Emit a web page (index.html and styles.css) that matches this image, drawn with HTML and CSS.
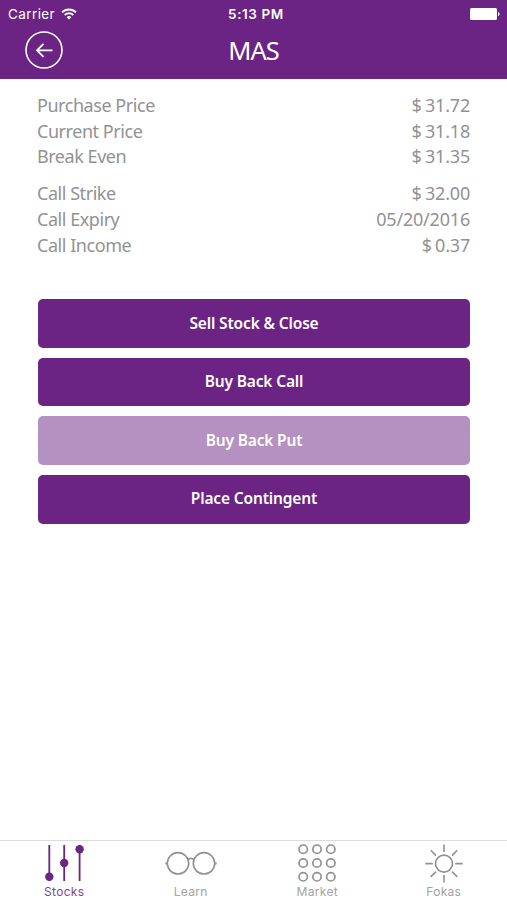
FILE: index.html
```html
<!DOCTYPE html>
<html lang="en">
<head>
  <meta charset="UTF-8">
  <meta name="viewport" content="width=device-width, initial-scale=1.0">
  <title>MAS</title>
  <link rel="stylesheet" href="styles.css">
</head>
<body>
  <header class="header">
    <div class="status-bar">
      <div class="carrier">
        <span>Carrier</span>
        <svg class="wifi" width="16" height="12" viewBox="0 0 16 12" fill="none" stroke="#fff" stroke-width="1.9">
          <path d="M1 4.3a10 10 0 0 1 14 0"/>
          <path d="M3.7 7a6.2 6.2 0 0 1 8.6 0"/>
          <path d="M8 11.6 5.6 9.2a3.4 3.4 0 0 1 4.8 0z" fill="#fff" stroke="none"/>
        </svg>
      </div>
      <div class="time">5:13 PM</div>
      <svg class="battery" width="30" height="12" viewBox="0 0 30 12" fill="#fff">
        <rect width="27" height="12" rx="1.5"/>
        <path d="M28 4c2 .6 2 3.4 0 4z"/>
      </svg>
    </div>
    <div class="nav-bar">
      <button class="back" aria-label="Back">
        <svg width="38" height="38" viewBox="0 0 38 38" fill="none" stroke="#fff" stroke-width="1.6">
          <circle cx="19" cy="19" r="18"/>
          <path d="M27.5 19.3H12M18.5 12.8 12 19.3l6.500 6.500" stroke-width="1.8"/>
        </svg>
      </button>
      <h1>MAS</h1>
    </div>
  </header>

  <main>
    <dl class="details">
      <div class="row"><dt>Purchase Price</dt><dd>$ 31.72</dd></div>
      <div class="row"><dt>Current Price</dt><dd>$ 31.18</dd></div>
      <div class="row"><dt>Break Even</dt><dd>$ 31.35</dd></div>
    </dl>
    <dl class="details">
      <div class="row"><dt>Call Strike</dt><dd>$ 32.00</dd></div>
      <div class="row"><dt>Call Expiry</dt><dd>05/20/2016</dd></div>
      <div class="row"><dt>Call Income</dt><dd>$ 0.37</dd></div>
    </dl>

    <div class="actions">
      <button class="btn">Sell Stock &amp; Close</button>
      <button class="btn">Buy Back Call</button>
      <button class="btn" disabled>Buy Back Put</button>
      <button class="btn">Place Contingent</button>
    </div>
  </main>

  <nav class="tabs">
    <a class="tab active">
      <svg width="56" height="40" viewBox="0 0 56 40" stroke="currentColor" stroke-width="1.8">
        <path d="M13.3 2v36M28.2 2v36M43.6 2v36"/>
        <g fill="currentColor" stroke="none">
          <circle cx="13.3" cy="33.8" r="4.2"/>
          <circle cx="28.2" cy="20" r="4.2"/>
          <circle cx="43.6" cy="6.3" r="4.2"/>
        </g>
      </svg>
      <span>Stocks</span>
    </a>
    <a class="tab">
      <svg width="56" height="40" viewBox="0 0 56 40" fill="none" stroke="currentColor" stroke-width="1.6">
        <circle cx="15" cy="20.300" r="10.700"/>
        <circle cx="41" cy="20.300" r="10.700"/>
        <path d="M24.800 17c1.500-2.200 4.900-2.200 6.400 0"/>
        <path d="M2.300 20.500h2M51.700 20.500h2" stroke-width="2.200"/>
      </svg>
      <span>Learn</span>
    </a>
    <a class="tab">
      <svg width="56" height="40" viewBox="0 0 56 40" fill="none" stroke="currentColor" stroke-width="1.7">
        <circle cx="14.2" cy="6.2" r="4.2"/><circle cx="28" cy="6.2" r="4.2"/><circle cx="41.8" cy="6.2" r="4.2"/>
        <circle cx="14.2" cy="20" r="4.2"/><circle cx="28" cy="20" r="4.2"/><circle cx="41.8" cy="20" r="4.2"/>
        <circle cx="14.2" cy="33.8" r="4.2"/><circle cx="28" cy="33.8" r="4.2"/><circle cx="41.8" cy="33.8" r="4.2"/>
      </svg>
      <span>Market</span>
    </a>
    <a class="tab">
      <svg width="56" height="40" viewBox="0 0 56 40" fill="none" stroke="currentColor" stroke-width="1.6">
        <circle cx="28" cy="20.600" r="8.500"/>
        <path d="M28 1.500v7.500M28 32v7.500M9.300 20.600h7.500M39.200 20.600h7.500M14.700 7.300l5.300 5.300M36 28.600l5.300 5.300M14.700 33.900l5.300-5.300M36 12.600l5.300-5.300"/>
      </svg>
      <span>Fokas</span>
    </a>
  </nav>
</body>
</html>
```

FILE: styles.css
```css
* {
    box-sizing: border-box;
}

body {
    margin: 0;
    height: 100vh;
    display: flex;
    flex-direction: column;
    background: #fff;
    color: #929292;
    font-family: "Noto Sans", "Open Sans", sans-serif;
}

button {
    border: 0;
    padding: 0;
    background: none;
    color: #fff;
    font-family: inherit;
}

.header {
    height: 79px;
    background: #6b2483;
    color: #fff;
}

/* Status bar */
.status-bar {
    display: grid;
    grid-template-columns: 1fr auto 1fr;
    align-items: center;
    height: 27px;
    padding: 0 7px 0 8px;
    font: 13.5px Inter, sans-serif;
}

.carrier {
    display: flex;
    align-items: center;
    gap: 6px;
    letter-spacing: 0.4px;
}

.time {
    padding-left: 4px;
    font-size: 13.5px;
    font-weight: 600;
    letter-spacing: 0.6px;
}

.battery {
    justify-self: end;
}

/* Title row */
.nav-bar {
    display: grid;
    grid-template-columns: 1fr auto 1fr;
    align-items: center;
    height: 46px;
    padding: 0 25px;
}

.back {
    width: 38px;
    height: 38px;
}

.back svg {
    display: block;
}

h1 {
    margin: 0;
    font-size: 25.5px;
    font-weight: 400;
    line-height: 34px;
    letter-spacing: -1px;
}

main {
    flex: 1;
    padding: 14px 37px 0;
}

.details {
    margin: 0 0 11px;
    font-size: 18px;
    line-height: 25.7px;
}

.row {
    display: flex;
    justify-content: space-between;
}

dt {
    letter-spacing: -0.45px;
}

dd {
    margin: 0;
    letter-spacing: -0.2px;
    word-spacing: -1.2px;
}

.actions {
    display: flex;
    flex-direction: column;
    gap: 10px;
    margin-top: 41px;
    padding-left: 1px;
}

.btn {
    height: 48.6px;
    padding-bottom: 2px;
    border-radius: 5px;
    background: #6b2483;
    font-size: 15.5px;
    font-weight: 600;
    letter-spacing: -0.15px;
}

.btn:disabled {
    background: #b591c1;
}

/* Bottom tabs */
.tabs {
    display: grid;
    grid-template-columns: repeat(4, 1fr);
    height: 60px;
    padding-left: 1px;
    border-top: 1px solid #dcdcdc;
}

.tab {
    display: flex;
    flex-direction: column;
    align-items: center;
    padding-top: 2px;
    font: 12px/18px Inter, sans-serif;
    letter-spacing: 0.3px;
}

.tab span {
    opacity: 0.85;
}

.tab.active {
    color: #6b2483;
}
```
